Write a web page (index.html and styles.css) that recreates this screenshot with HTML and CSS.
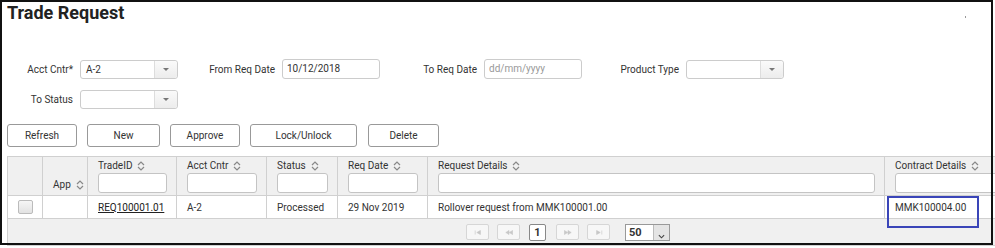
FILE: index.html
```html
<!DOCTYPE html>
<html lang="en">
<head>
    <meta charset="UTF-8">
    <title>Trade Request</title>
    <link rel="stylesheet" href="styles.css">
</head>
<body>
    <div class="page">
        <div class="title-bar">
            <h1>Trade Request</h1>
            <span class="dot"></span>
        </div>

        <div class="filters">
            <div class="filter-row">
                <div class="field">
                    <label>Acct Cntr*</label>
                    <div class="select"><span class="select-value">A-2</span><span class="select-btn"><span class="caret"></span></span></div>
                </div>
                <div class="field">
                    <label>From Req Date</label>
                    <div class="date-input">10/12/2018</div>
                </div>
                <div class="field">
                    <label>To Req Date</label>
                    <div class="date-input placeholder">dd/mm/yyyy</div>
                </div>
                <div class="field">
                    <label>Product Type</label>
                    <div class="select"><span class="select-value"></span><span class="select-btn"><span class="caret"></span></span></div>
                </div>
            </div>
            <div class="filter-row">
                <div class="field">
                    <label>To Status</label>
                    <div class="select"><span class="select-value"></span><span class="select-btn"><span class="caret"></span></span></div>
                </div>
            </div>
        </div>

        <div class="toolbar">
            <button class="button">Refresh</button>
            <button class="button button-new">New</button>
            <button class="button">Approve</button>
            <button class="button button-wide">Lock/Unlock</button>
            <button class="button button-delete">Delete</button>
        </div>

        <table class="grid">
            <colgroup>
                <col style="width:35px">
                <col style="width:45px">
                <col style="width:89px">
                <col style="width:90px">
                <col style="width:71px">
                <col style="width:90px">
                <col style="width:457px">
                <col style="width:130px">
            </colgroup>
            <thead>
                <tr>
                    <th></th>
                    <th class="th-plain"><span class="th-label">App <svg class="sort" viewBox="0 0 8 10"><path d="M1 4 L4 1 L7 4 M1 6 L4 9 L7 6"/></svg></span></th>
                    <th><span class="th-label">TradeID <svg class="sort" viewBox="0 0 8 10"><path d="M1 4 L4 1 L7 4 M1 6 L4 9 L7 6"/></svg></span><div class="th-filter"></div></th>
                    <th><span class="th-label">Acct Cntr <svg class="sort" viewBox="0 0 8 10"><path d="M1 4 L4 1 L7 4 M1 6 L4 9 L7 6"/></svg></span><div class="th-filter"></div></th>
                    <th><span class="th-label">Status <svg class="sort" viewBox="0 0 8 10"><path d="M1 4 L4 1 L7 4 M1 6 L4 9 L7 6"/></svg></span><div class="th-filter"></div></th>
                    <th><span class="th-label">Req Date <svg class="sort" viewBox="0 0 8 10"><path d="M1 4 L4 1 L7 4 M1 6 L4 9 L7 6"/></svg></span><div class="th-filter"></div></th>
                    <th><span class="th-label">Request Details <svg class="sort" viewBox="0 0 8 10"><path d="M1 4 L4 1 L7 4 M1 6 L4 9 L7 6"/></svg></span><div class="th-filter"></div></th>
                    <th><span class="th-label">Contract Details <svg class="sort" viewBox="0 0 8 10"><path d="M1 4 L4 1 L7 4 M1 6 L4 9 L7 6"/></svg></span><div class="th-filter th-filter-open"></div></th>
                </tr>
            </thead>
            <tbody>
                <tr>
                    <td><span class="checkbox"></span></td>
                    <td></td>
                    <td><a class="trade-link">REQ100001.01</a></td>
                    <td>A-2</td>
                    <td>Processed</td>
                    <td>29 Nov 2019</td>
                    <td>Rollover request from MMK100001.00</td>
                    <td class="marked">MMK100004.00<span class="highlight"></span></td>
                </tr>
                <tr class="pager-row">
                    <td colspan="8">
                        <div class="pager">
                            <span class="page-btn"><svg viewBox="0 0 10 6"><path d="M1.5 0.5 V5.5 M8 0.5 L3.5 3 L8 5.5 Z"/></svg></span>
                            <span class="page-btn"><svg viewBox="0 0 10 6"><path d="M5 0.5 L1 3 L5 5.5 Z M9.5 0.5 L5.5 3 L9.5 5.5 Z"/></svg></span>
                            <span class="page-num">1</span>
                            <span class="page-btn"><svg viewBox="0 0 10 6"><path d="M0.5 0.5 L4.5 3 L0.5 5.5 Z M5 0.5 L9 3 L5 5.5 Z"/></svg></span>
                            <span class="page-btn"><svg viewBox="0 0 10 6"><path d="M2 0.5 L6.5 3 L2 5.5 Z M8.5 0.5 V5.5"/></svg></span>
                            <span class="page-size"><span class="page-size-value">50</span><span class="page-size-btn"><svg viewBox="0 0 8 5"><path d="M1 1 L4 4 L7 1"/></svg></span></span>
                        </div>
                    </td>
                </tr>
            </tbody>
        </table>
    </div>
</body>
</html>
```

FILE: styles.css
```css
body {
    margin: 0;
    width: 995px;
    height: 248px;
    overflow: hidden;
    background: #fff;
    font-family: Roboto, "Liberation Sans", sans-serif;
    font-size: 10px;
    color: #333;
}

.page {
    position: relative;
    height: 248px;
    padding: 1px 0 0 7px;
    box-sizing: border-box;
}

/* black frame drawn over the page */
.page::after {
    content: "";
    position: absolute;
    left: 0;
    top: 0;
    width: 989px;
    height: 241px;
    border: 2px solid #111;
    pointer-events: none;
    z-index: 2;
}

.title-bar {
    display: flex;
    justify-content: space-between;
    align-items: flex-start;
    height: 24px;
}

.title-bar h1 {
    margin: 0;
    font-size: 18px;
    line-height: 24px;
    font-weight: bold;
    color: #222;
}

.dot {
    width: 1px;
    height: 2px;
    margin: 15px 29px 0 0;
    background: #999;
}

.filters {
    margin-top: 34px;
}

.filter-row {
    display: flex;
    align-items: center;
    height: 20px;
    margin-bottom: 10px;
}

.field {
    display: flex;
    align-items: center;
    width: 202px;
}

.field label {
    width: 66px;
    margin-right: 7px;
    text-align: right;
    white-space: nowrap;
}

.select {
    display: flex;
    width: 98px;
    height: 19px;
    border: 1px solid #ccc;
    border-radius: 3px;
    box-sizing: border-box;
    background: #fff;
}

.select-value {
    flex: 1;
    padding-left: 5px;
    line-height: 17px;
}

.select-btn {
    width: 22px;
    display: flex;
    align-items: center;
    justify-content: center;
    border-left: 1px solid #ddd;
    background: linear-gradient(#fafafa, #ececec);
    border-radius: 0 3px 3px 0;
}

.caret {
    width: 0;
    height: 0;
    border-left: 3px solid transparent;
    border-right: 3px solid transparent;
    border-top: 3px solid #777;
}

.date-input {
    width: 98px;
    height: 20px;
    line-height: 18px;
    padding-left: 4px;
    border: 1px solid #ccc;
    border-radius: 3px;
    box-sizing: border-box;
}

.date-input.placeholder {
    color: #999;
}

.toolbar {
    display: flex;
    gap: 10px;
    margin-top: 15px;
}

.button {
    width: 70px;
    height: 23px;
    padding: 0;
    border: 1px solid #999;
    border-radius: 3px;
    background: #fff;
    font-family: inherit;
    font-size: 10px;
    color: #333;
}

.button-new {
    width: 73px;
}

.button-wide {
    width: 107px;
}

.button-delete {
    width: 71px;
    margin-left: 1px;
}

.grid {
    margin-top: 9px;
    border-collapse: collapse;
    table-layout: fixed;
    width: 1007px;
}

.grid th,
.grid td {
    border: 1px solid #d0d0d0;
    padding: 0 0 0 10px;
    text-align: left;
    white-space: nowrap;
    overflow: hidden;
}

.grid th {
    background: #f0f0f0;
    font-weight: normal;
    vertical-align: top;
    padding-top: 2px;
    padding-bottom: 2px;
}

.grid th.th-plain {
    padding-top: 21px;
}

.th-label {
    display: flex;
    align-items: center;
    gap: 5px;
    height: 13px;
}

.sort {
    width: 8px;
    height: 10px;
    fill: none;
    stroke: #888;
    stroke-width: 1.2;
}

.th-filter {
    height: 20px;
    margin: 1px 9px 0 0;
    border: 1px solid #c4c4c4;
    border-radius: 3px;
    background: #fff;
    box-sizing: border-box;
}

.th-filter-open {
    margin-right: -4px;
}

.grid td {
    height: 22px;
    background: #fff;
}

.checkbox {
    display: block;
    width: 15px;
    height: 14px;
    border: 1px solid #bbb;
    border-radius: 2px;
    box-sizing: border-box;
    background: linear-gradient(#f6f6f6, #e2e2e2);
}

.trade-link {
    color: #222;
    text-decoration: underline;
}

.marked {
    position: relative;
    overflow: visible !important;
}

/* annotation box round the contract cell */
.highlight {
    position: absolute;
    left: 2px;
    top: 0;
    width: 88px;
    height: 28px;
    border: 2px solid #3a45b8;
    z-index: 1;
}

.grid .pager-row td {
    height: 26px;
    background: #f0f0f0;
    padding: 0;
}

.pager {
    display: flex;
    align-items: center;
    padding-left: 458px;
}

.page-btn {
    display: flex;
    align-items: center;
    justify-content: center;
    width: 21px;
    height: 14px;
    margin-right: 8px;
    border: 1px solid #d6d6d6;
    border-radius: 2px;
    background: #f7f7f7;
}

.page-btn svg {
    width: 8px;
    height: 5px;
    fill: #c8c8c8;
    stroke: #c8c8c8;
    stroke-width: 0.8;
}

.page-num {
    width: 15px;
    height: 15px;
    margin: 0 10px 0 1px;
    line-height: 15px;
    text-align: center;
    font-weight: bold;
    font-size: 11px;
    border: 1px solid #888;
    border-radius: 2px;
    background: #fff;
}

.page-size {
    display: flex;
    margin-left: 7px;
    height: 15px;
    border: 1px solid #999;
    background: #fff;
}

.page-size-value {
    width: 24px;
    padding-left: 3px;
    line-height: 15px;
    font-size: 11px;
    font-weight: bold;
}

.page-size-btn {
    width: 15px;
    display: flex;
    align-items: flex-end;
    justify-content: center;
    padding-bottom: 1px;
    border-left: 1px solid #bbb;
    background: #e4e4e4;
}

.page-size-btn svg {
    width: 7px;
    height: 5px;
    fill: none;
    stroke: #444;
    stroke-width: 1.3;
}
```
